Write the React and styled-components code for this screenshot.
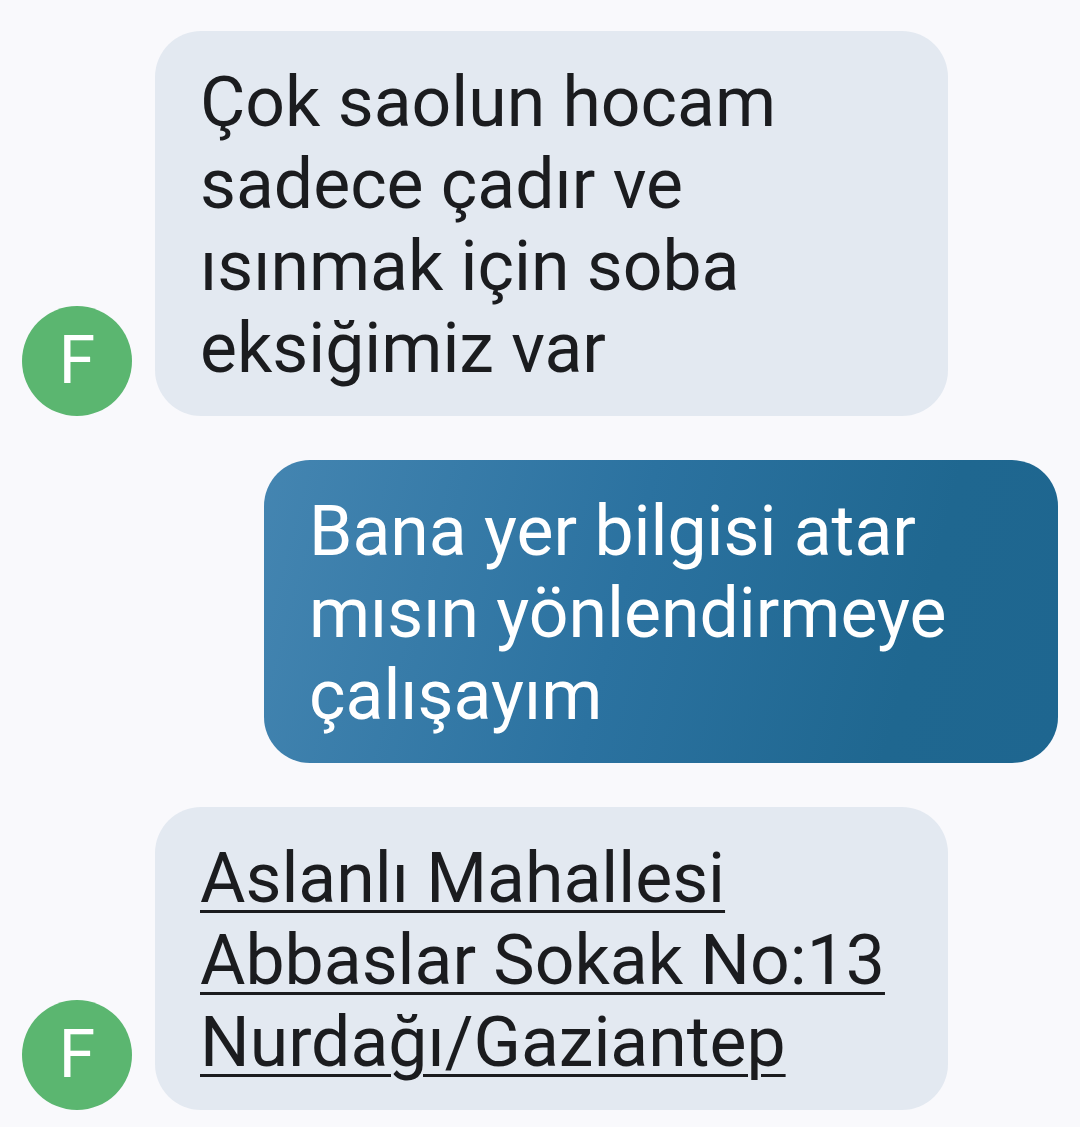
import React from "react";
import styled, { createGlobalStyle } from "styled-components";

const Global = createGlobalStyle`
  html, body { margin: 0; padding: 0; background: #f9f9fc; }
  body { font-family: Roboto, "Noto Sans", sans-serif; }
`;

const Thread = styled.div`
  display: flex;
  flex-direction: column;
  gap: 44px;
  padding: 31px 22px 17px 22px;
  box-sizing: border-box;
  width: 1080px;
  min-height: 1127px;
`;

const Row = styled.div`
  display: flex;
  align-items: flex-end;
  justify-content: ${(p) => (p.$out ? "flex-end" : "flex-start")};
  gap: 23px;
`;

const Avatar = styled.div`
  width: 110px;
  height: 110px;
  flex: 0 0 110px;
  border-radius: 50%;
  background: #5bb670;
  color: #ffffff;
  display: flex;
  align-items: center;
  justify-content: center;
  font-family: Roboto, sans-serif;
  font-weight: 400;
  font-size: 66px;
  line-height: 1;
`;

const Bubble = styled.div`
  box-sizing: border-box;
  width: ${(p) => (p.$out ? "794px" : "793px")};
  padding: 30px 45px 27px 45px;
  border-radius: 46px;
  background: ${(p) =>
    p.$out
      ? "linear-gradient(105deg, #4485b1 0%, #2b72a0 45%, #1f6790 80%, #1e6690 100%)"
      : "#e3e9f1"};
  color: ${(p) => (p.$out ? "#ffffff" : "#1b1c1f")};
  font-family: Roboto, sans-serif;
  font-size: 69.7px;
  line-height: 82px;
  font-weight: 400;
`;

const Line = styled.div`
  white-space: nowrap;
`;

const Link = styled.span`
  text-decoration: underline;
  text-decoration-thickness: 3px;
  text-underline-offset: 8px;
`;

export default function App() {
  return (
    <>
      <Global />
      <Thread>
        <Row>
          <Avatar>F</Avatar>
          <Bubble>
            <Line>Çok saolun hocam</Line>
            <Line>sadece çadır ve</Line>
            <Line>ısınmak için soba</Line>
            <Line>eksiğimiz var</Line>
          </Bubble>
        </Row>
        <Row $out>
          <Bubble $out>
            <Line>Bana yer bilgisi atar</Line>
            <Line>mısın yönlendirmeye</Line>
            <Line>çalışayım</Line>
          </Bubble>
        </Row>
        <Row>
          <Avatar>F</Avatar>
          <Bubble>
            <Line><Link>Aslanlı Mahallesi</Link></Line>
            <Line><Link>Abbaslar Sokak No:13</Link></Line>
            <Line><Link>Nurdağı/Gaziantep</Link></Line>
          </Bubble>
        </Row>
      </Thread>
    </>
  );
}
